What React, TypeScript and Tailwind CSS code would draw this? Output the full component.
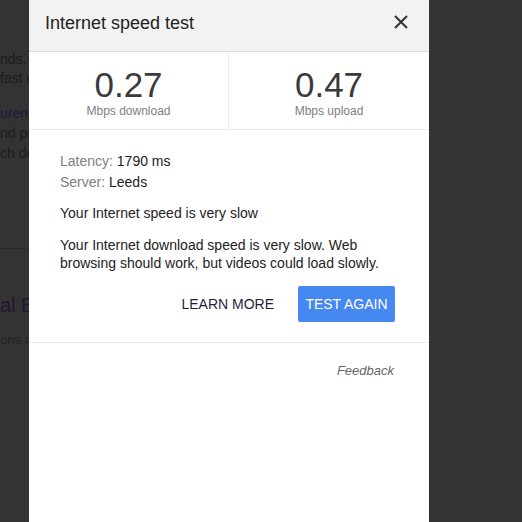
import React from 'react';

export default function App() {
  return (
    <div className="flex h-[522px] w-[522px] overflow-hidden bg-[#333333] font-['Liberation_Sans',Arial,sans-serif]">
      {/* page behind the overlay, mostly hidden */}
      <div className="w-[29px] shrink-0 overflow-hidden whitespace-nowrap text-[14px] text-[#1c1c1c]">
        <div className="h-[50px]" />
        <div className="h-[19px] leading-[19px]">nds.</div>
        <div className="h-[19px] leading-[19px]">fast c</div>
        <div className="h-[15px]" />
        <div className="h-[20px] leading-[20px] text-[#1a1a38]">ureme</div>
        <div className="h-[20px] leading-[20px]">nd pr</div>
        <div className="h-[20px] leading-[20px]">ch de</div>
        <div className="h-[85px]" />
        <div className="h-px bg-[#2a2a2a]" />
        <div className="h-[44px]" />
        <div className="h-[24px] leading-[24px] text-[20px] text-[#231634]">al B</div>
        <div className="h-[13px]" />
        <div className="h-[20px] leading-[20px] text-[13px] text-[#242424]">ons a</div>
      </div>

      {/* dialog */}
      <div className="flex w-[400px] shrink-0 flex-col bg-white">
        <div className="flex h-[52px] items-center justify-between border-b border-[#dcdcdc] bg-[#f2f2f2] pl-4 pr-[21px]">
          <h1 className="pb-1 text-[18px] text-[#222]">Internet speed test</h1>
          <svg width="14" height="14" viewBox="0 0 14 14" className="mb-[8px]">
            <path d="M1 1 L13 13 M13 1 L1 13" stroke="#333" strokeWidth="2" />
          </svg>
        </div>

        <div className="grid h-[78px] grid-cols-2 border-b border-[#ececec]">
          <div className="flex flex-col items-center border-r border-[#ececec] pt-[14px]">
            <span className="text-[35px] leading-[38px] text-[#3a3a3a]">0.27</span>
            <span className="text-[12px] leading-[14px] text-[#808080]">Mbps download</span>
          </div>
          <div className="flex flex-col items-center pt-[14px]">
            <span className="text-[35px] leading-[38px] text-[#3a3a3a]">0.47</span>
            <span className="text-[12px] leading-[14px] text-[#808080]">Mbps upload</span>
          </div>
        </div>

        <div className="border-b border-[#ececec] px-[31px] pb-[20px] pt-[21px] text-[14px] text-[#222]">
          <div className="leading-[21px]">
            <span className="text-[#808080]">Latency:</span> 1790 ms
          </div>
          <div className="leading-[21px]">
            <span className="text-[#808080]">Server:</span> Leeds
          </div>
          <p className="mt-[10px] leading-[21px]">Your Internet speed is very slow</p>
          <p className="mt-[12px] leading-[18px]">
            Your Internet download speed is very slow. Web browsing should work, but videos could load slowly.
          </p>
          <div className="mt-[14px] flex items-center justify-end gap-6 pr-[3px]">
            <button className="text-[14px] text-[#1f1f3d]">LEARN MORE</button>
            <button className="h-[36px] w-[97px] rounded-[2px] bg-[#4688f1] text-[14px] text-white">TEST AGAIN</button>
          </div>
        </div>

        <div className="flex justify-end pr-[35px] pt-[18px]">
          <span className="text-[13px] italic leading-[20px] text-[#666]">Feedback</span>
        </div>
      </div>

      <div className="flex-1" />
    </div>
  );
}
